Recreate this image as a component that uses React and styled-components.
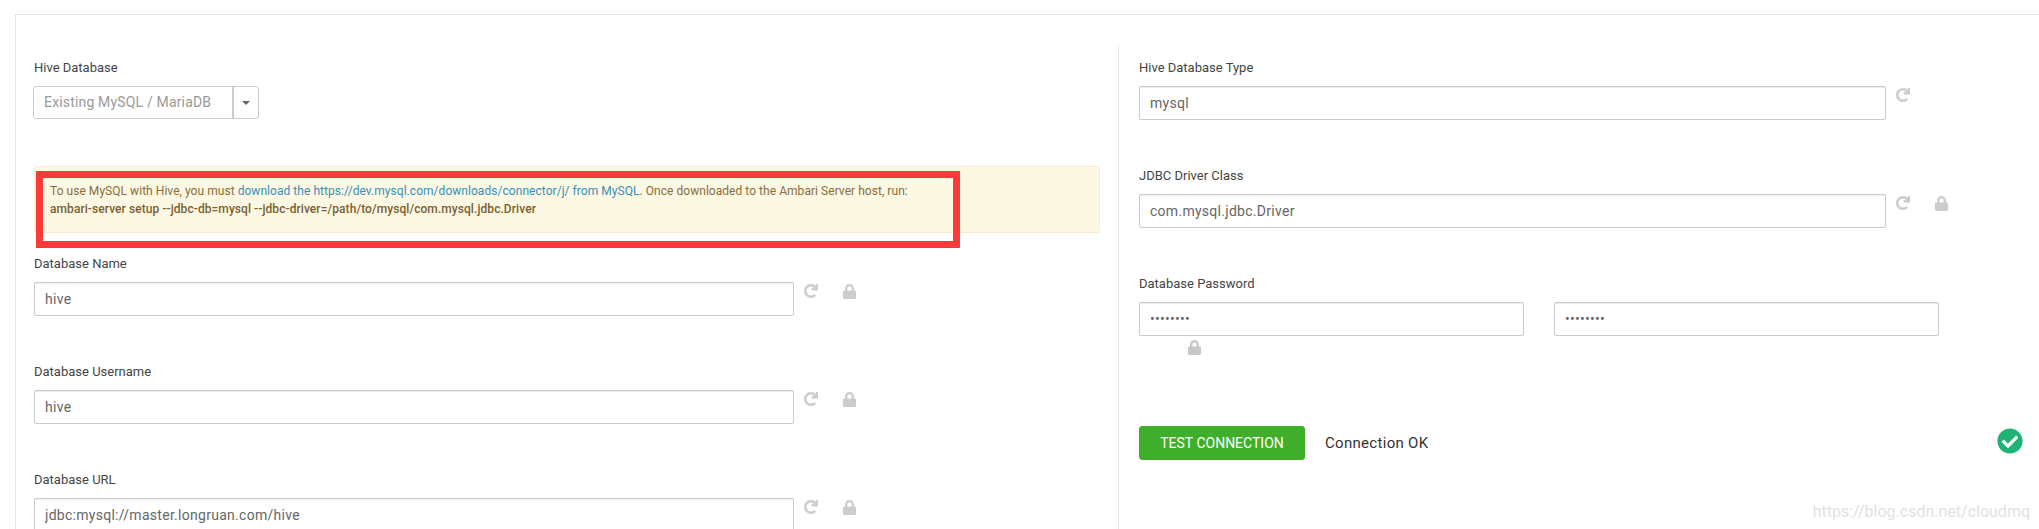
import React from 'react';
import styled, { createGlobalStyle } from 'styled-components';
import { FaRedo, FaLock, FaCheckCircle } from 'react-icons/fa';

const Global = createGlobalStyle`
  html, body { margin: 0; padding: 0; background: #fff; }
  body { width: 2039px; height: 529px; overflow: hidden; font-family: Roboto, "Liberation Sans", sans-serif; }
  * { box-sizing: border-box; }
`;

const Page = styled.div`
  position: relative;
  width: 2039px;
  height: 529px;
  overflow: hidden;
  padding: 14px 0 0 15px;
`;
const Panel = styled.div`
  border: 1px solid #e6e6e6;
  border-right: none;
  border-bottom: none;
  display: grid;
  grid-template-columns: 1102px 1fr;
  height: 600px;
  padding-top: 30px;
`;
const LeftCol = styled.div`
  padding: 14px 18px 0 18px;
`;
const RightCol = styled.div`
  position: relative;
  border-left: 1px solid #e6e6e6;
  padding: 14px 16px 0 20px;
`;
const Field = styled.div`
  margin-bottom: ${p => p.$after ?? 47}px;
`;
const Label = styled.div`
  font-size: 13px;
  line-height: 18px;
  color: #444;
  margin-bottom: 9px;
`;
const Row = styled.div`
  display: flex;
  align-items: flex-start;
  gap: ${p => p.$gap ?? 0}px;
`;
const TextInput = styled.input`
  width: ${p => p.$w}px;
  height: 34px;
  border: 1px solid #ccc;
  border-radius: 2px;
  padding: 0 10px;
  font: 14px Roboto, sans-serif;
  letter-spacing: 0.28px;
  color: #666;
  background: #fff;
  box-shadow: inset 0 1px 1px rgba(0,0,0,0.075);
  outline: none;
  flex: none;
`;
const Select = styled.div`
  display: flex;
  width: 226px;
  height: 33px;
  margin-left: -1px;
  border: 1px solid #ccc;
  border-radius: 3px;
  background: #fff;
`;
const SelectValue = styled.div`
  width: 200px;
  padding-left: 10px;
  font-size: 14px;
  letter-spacing: 0.17px;
  line-height: 31px;
  color: #999;
  border-right: 2px solid #ccc;
  white-space: nowrap;
`;
const SelectCaret = styled.div`
  flex: 1;
  display: flex;
  align-items: center;
  justify-content: center;
  &::after {
    content: '';
    border-top: 4px solid #666;
    border-left: 4px solid transparent;
    border-right: 4px solid transparent;
  }
`;
const Alert = styled.div`
  position: relative;
  height: 67px;
  margin: 0 0 22px 0;
  padding: 15px 15px;
  background: #fcf8e3;
  border: 1px solid #faebcc;
  border-radius: 3px;
  font-size: 12px;
  letter-spacing: 0.045px;
  line-height: 18px;
  color: #8a6d3b;
`;
const AlertLink = styled.a`
  color: #3a8fb7;
  text-decoration: none;
`;
const AlertStrong = styled.strong`
  display: block;
  font-weight: 500;
  letter-spacing: 0.07px;
  color: #7a5f30;
`;
const Highlight = styled.div`
  position: absolute;
  left: 1px;
  top: 4px;
  width: 924px;
  height: 77px;
  border: 7px solid #fc3a3a;
  pointer-events: none;
`;
const Icons = styled.div`
  display: flex;
  align-items: center;
  height: 14px;
  margin: 2px 0 0 10px;
  gap: 24px;
  color: #ccc;
  svg:first-child {
    stroke: currentColor;
    stroke-width: 24px;
  }
`;
const LockLine = styled.div`
  display: flex;
  height: 15px;
  margin: 4px 0 0 48px;
  color: #c8c8c8;
`;
const TestRow = styled.div`
  display: flex;
  align-items: center;
  margin-top: 71px;
`;
const TestButton = styled.button`
  width: 166px;
  height: 34px;
  border: 1px solid #3fae2a;
  border-radius: 3px;
  background: #3fae2a;
  color: #fff;
  font: 400 14px Roboto, sans-serif;
  text-transform: uppercase;
  padding: 0;
`;
const Status = styled.span`
  margin-left: 20px;
  font-size: 15px;
  letter-spacing: 0.3px;
  color: #333;
`;
const OkIcon = styled.span`
  margin: -5px 0 0 auto;
  display: flex;
  color: #1eb475;
`;
const Watermark = styled.div`
  position: absolute;
  right: 9px;
  top: 502px;
  font-size: 16px;
  line-height: 20px;
  color: #e2e2e2;
`;

const FieldIcons = ({ lock = true }) => (
  <Icons>
    <FaRedo size={14} />
    {lock && <FaLock size={15} />}
  </Icons>
);

export default function App() {
  return (
    <Page>
      <Global />
      <Panel>
        <LeftCol>
          <Field>
            <Label>Hive Database</Label>
            <Select>
              <SelectValue>Existing MySQL / MariaDB</SelectValue>
              <SelectCaret />
            </Select>
          </Field>
          <Alert>
            To use MySQL with Hive, you must{' '}
            <AlertLink>download the https://dev.mysql.com/downloads/connector/j/ from MySQL</AlertLink>. Once downloaded to the Ambari Server host, run:
            <AlertStrong>ambari-server setup --jdbc-db=mysql --jdbc-driver=/path/to/mysql/com.mysql.jdbc.Driver</AlertStrong>
            <Highlight />
          </Alert>
          <Field>
            <Label>Database Name</Label>
            <Row><TextInput $w={760} readOnly value="hive" /><FieldIcons /></Row>
          </Field>
          <Field>
            <Label>Database Username</Label>
            <Row><TextInput $w={760} readOnly value="hive" /><FieldIcons /></Row>
          </Field>
          <Field>
            <Label>Database URL</Label>
            <Row><TextInput $w={760} readOnly value="jdbc:mysql://master.longruan.com/hive" /><FieldIcons /></Row>
          </Field>
        </LeftCol>
        <RightCol>
          <Field>
            <Label>Hive Database Type</Label>
            <Row><TextInput $w={747} readOnly value="mysql" /><FieldIcons lock={false} /></Row>
          </Field>
          <Field>
            <Label>JDBC Driver Class</Label>
            <Row><TextInput $w={747} readOnly value="com.mysql.jdbc.Driver" /><FieldIcons /></Row>
          </Field>
          <Field $after={0}>
            <Label>Database Password</Label>
            <Row $gap={30}>
              <TextInput $w={385} type="password" readOnly value="bigdata1" />
              <TextInput $w={385} type="password" readOnly value="bigdata1" />
            </Row>
            <LockLine><FaLock size={15} /></LockLine>
          </Field>
          <TestRow>
            <TestButton>Test Connection</TestButton>
            <Status>Connection OK</Status>
            <OkIcon><FaCheckCircle size={26} /></OkIcon>
          </TestRow>
        </RightCol>
      </Panel>
      <Watermark>https://blog.csdn.net/cloudmq</Watermark>
    </Page>
  );
}
